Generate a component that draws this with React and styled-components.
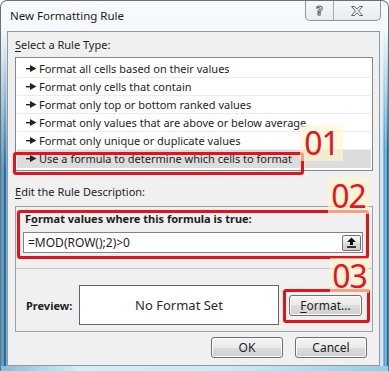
import React from 'react';
import styled, { createGlobalStyle } from 'styled-components';

const GlobalStyle = createGlobalStyle`
  html, body { margin: 0; padding: 0; background: #fff; }
  body {
    font-family: "Noto Sans", "Liberation Sans", sans-serif;
    font-size: 11px;
    color: #1e1e1e;
  }
`;

const Window = styled.div`
  position: relative;
  width: 389px;
  height: 371px;
  box-sizing: border-box;
  display: flex;
  flex-direction: column;
  border: 1px solid #6b7177;
  border-bottom: none;
  border-radius: 7px 7px 0 0;
  overflow: hidden;
  background: linear-gradient(to bottom, #f7fafc 0, #eef4f8 120px, #d7e9f3 100%);
`;

const TitleBar = styled.div`
  height: 30px;
  display: flex;
  justify-content: space-between;
  align-items: flex-start;
  padding-left: 9px;
`;

const Title = styled.div`
  line-height: 30px;
  font-size: 11.5px;
  color: #1b1b1b;
`;

const CaptionGroup = styled.div`
  display: flex;
  height: 19px;
  margin-right: 7px;
  border: 1px solid #8e9499;
  border-top: none;
  border-radius: 0 0 5px 5px;
  overflow: hidden;
  background: linear-gradient(to bottom, #f6f8fa, #e7ecef);
`;

const CaptionButton = styled.div`
  width: ${(p) => p.$w}px;
  display: flex;
  align-items: center;
  justify-content: center;
  & + & { border-left: 1px solid #a7adb2; }
`;

const HelpGlyph = styled.span`
  font-family: "DejaVu Sans", sans-serif;
  font-size: 12px;
  font-weight: bold;
  color: #fdfdfd;
  -webkit-text-stroke: 1px #5d6166;
  line-height: 1;
`;

const Body = styled.div`
  flex: 1;
  display: flex;
`;

const LeftFrame = styled.div`
  width: 6px;
  background:
    linear-gradient(to bottom, #f3f7fa 0, rgba(243, 247, 250, 0) 140px),
    linear-gradient(to right, #6f8496 0, #4eb6e6 2px, #1c4e80 4px, #9ccbe6 6px);
`;

const RightFrame = styled.div`
  width: 8px;
  background:
    linear-gradient(to bottom, #f3f7fa 0, rgba(243, 247, 250, 0) 120px),
    linear-gradient(to right, #dde9f0 0, #cfe3ef 3px, #3f8fca 4px, #7ed0f0 6px, #1a3e66 8px);
`;

const BottomFrame = styled.div`
  height: 5px;
  background: linear-gradient(to right, #8fb8d3, #d6ecf7 20%, #cfe7f4 60%, #9cc9e3);
`;

const Client = styled.div`
  flex: 1;
  display: flex;
  flex-direction: column;
  border: 1px solid #8d98a1;
  background: #f0f0f0;
  padding: 0 6px 0 7px;
`;

const SectionLabel = styled.div`
  line-height: 16px;
  margin-top: ${(p) => p.$top}px;
  color: #1e1e1e;
  u { text-decoration: underline; text-underline-offset: 2px; }
`;

const ListBox = styled.div`
  margin-top: 4px;
  border: 1px solid #828790;
  background: #fff;
  padding-top: 2px;
  height: 110px;
`;

const ListRow = styled.div`
  height: 18px;
  box-sizing: border-box;
  display: flex;
  align-items: center;
  padding-left: 9px;
  margin: 0 1px;
  border-bottom: 1px solid ${(p) => (p.$selected ? 'transparent' : '#ececec')};
  background: ${(p) => (p.$selected ? '#dcdcdc' : 'transparent')};
  color: #1e1e1e;
  white-space: nowrap;
  svg { margin-right: 2px; flex: none; }
`;

const GroupBox = styled.div`
  margin-top: 6px;
  border: 1px solid #a0a0a0;
  display: flex;
  flex-direction: column;
`;

const FormulaSection = styled.div`
  padding: 4px 9px 15px 7px;
  border-bottom: 1px solid #c6c6c6;
`;

const BoldLabel = styled.div`
  font-weight: bold;
  line-height: 16px;
  padding-left: 2px;
  u { text-decoration: underline; text-underline-offset: 2px; }
`;

const FormulaInput = styled.div`
  margin-top: 5px;
  height: 21px;
  box-sizing: border-box;
  border: 1px solid #7f858c;
  background: #fff;
  display: flex;
  align-items: center;
  padding: 0 1px 0 4px;
`;

const FormulaText = styled.div`
  flex: 1;
  font-size: 12px;
`;

const CollapseButton = styled.div`
  width: 19px;
  height: 16px;
  box-sizing: border-box;
  border: 1px solid #6f6f6f;
  border-radius: 2px;
  background: linear-gradient(to bottom, #f6f6f6 0, #ebebeb 50%, #dcdcdc 50%, #d0d0d0 100%);
  display: flex;
  align-items: center;
  justify-content: center;
`;

const PreviewRow = styled.div`
  display: flex;
  align-items: center;
  padding: 16px 0 6px 10px;
`;

const PreviewLabel = styled.div`
  width: 53px;
  font-weight: bold;
`;

const PreviewBox = styled.div`
  width: 200px;
  height: 40px;
  box-sizing: border-box;
  border: 1px solid #646464;
  background: #fff;
  display: flex;
  align-items: center;
  justify-content: center;
  font-size: 13px;
  color: #2a2a2a;
`;

const Button = styled.div`
  width: ${(p) => p.$w}px;
  height: 21px;
  box-sizing: border-box;
  border: 1px solid #707070;
  border-radius: 3px;
  box-shadow: inset 0 0 0 1px #fbfbfb;
  background: linear-gradient(to bottom, #f3f3f3 0, #ebebeb 50%, #dddddd 50%, #cfcfcf 100%);
  display: flex;
  align-items: center;
  justify-content: center;
  margin-left: ${(p) => p.$ml || 0}px;
  font-size: 12px;
  color: #1e1e1e;
  u { text-decoration: underline; text-underline-offset: 2px; }
`;

const ButtonRow = styled.div`
  display: flex;
  justify-content: flex-end;
  gap: 12px;
  margin-top: 5px;
  padding-right: 6px;
`;

const Highlight = styled.div`
  position: absolute;
  left: ${(p) => p.$x}px;
  top: ${(p) => p.$y}px;
  width: ${(p) => p.$w}px;
  height: ${(p) => p.$h}px;
  box-sizing: border-box;
  border: 3px solid #e3131b;
  border-radius: 3px;
`;

const StepTag = styled.div`
  position: absolute;
  left: ${(p) => p.$x}px;
  top: ${(p) => p.$y}px;
  width: ${(p) => p.$w}px;
  height: ${(p) => p.$h}px;
  display: flex;
  align-items: center;
  justify-content: center;
  background: rgba(255, 246, 205, 0.62);
  color: #e8141b;
  font-family: "Noto Sans", sans-serif;
  font-size: 32px;
  letter-spacing: -1px;
  line-height: 1;
`;

const Arrow = () => (
  <svg width="11" height="7" viewBox="0 0 11 7">
    <rect x="0" y="3" width="5" height="1.4" fill="#222" />
    <polygon points="4,0 10.5,3.6 4,7" fill="#222" />
  </svg>
);

const rules = [
  'Format all cells based on their values',
  'Format only cells that contain',
  'Format only top or bottom ranked values',
  'Format only values that are above or below average',
  'Format only unique or duplicate values',
  'Use a formula to determine which cells to format',
];

export default function App() {
  return (
    <>
      <GlobalStyle />
      <Window>
        <TitleBar>
          <Title>New Formatting Rule</Title>
          <CaptionGroup>
            <CaptionButton $w={27}>
              <HelpGlyph>?</HelpGlyph>
            </CaptionButton>
            <CaptionButton $w={46}>
              <svg width="14" height="12" viewBox="0 0 14 12">
                <path
                  d="M1.5 1.5 H4.5 L7 4.3 L9.5 1.5 H12.5 L8.6 6 L12.5 10.5 H9.5 L7 7.7 L4.5 10.5 H1.5 L5.4 6 Z"
                  fill="#fafafa"
                  stroke="#5d6166"
                  strokeWidth="1"
                  strokeLinejoin="round"
                />
              </svg>
            </CaptionButton>
          </CaptionGroup>
        </TitleBar>
        <Body>
          <LeftFrame />
          <Client>
            <SectionLabel $top={5}>
              <u>S</u>elect a Rule Type:
            </SectionLabel>
            <ListBox>
              {rules.map((r, i) => (
                <ListRow key={r} $selected={i === rules.length - 1}>
                  <Arrow />
                  {r}
                </ListRow>
              ))}
            </ListBox>
            <SectionLabel $top={13}>
              <u>E</u>dit the Rule Description:
            </SectionLabel>
            <GroupBox>
              <FormulaSection>
                <BoldLabel>
                  F<u>o</u>rmat values where this formula is true:
                </BoldLabel>
                <FormulaInput>
                  <FormulaText>=MOD(ROW();2)&gt;0</FormulaText>
                  <CollapseButton>
                    <svg width="11" height="11" viewBox="0 0 11 11">
                      <polygon points="5.5,0.5 10,5 7,5 7,8 4,8 4,5 1,5" fill="#111" />
                      <rect x="1" y="9.2" width="9" height="1.6" fill="#111" />
                    </svg>
                  </CollapseButton>
                </FormulaInput>
              </FormulaSection>
              <PreviewRow>
                <PreviewLabel>Preview:</PreviewLabel>
                <PreviewBox>No Format Set</PreviewBox>
                <Button $w={73} $ml={10}>
                  <span>
                    <u>F</u>ormat...
                  </span>
                </Button>
              </PreviewRow>
            </GroupBox>
            <ButtonRow>
              <Button $w={72}>OK</Button>
              <Button $w={72}>Cancel</Button>
            </ButtonRow>
          </Client>
          <RightFrame />
        </Body>
        <BottomFrame />
        <Highlight $x={12} $y={151} $w={291} $h={23} />
        <Highlight $x={16} $y={209} $w={352} $h={49} />
        <Highlight $x={282} $y={288} $w={87} $h={34} />
        <StepTag $x={299} $y={124} $w={43} $h={36}>01</StepTag>
        <StepTag $x={327} $y={176} $w={41} $h={37}>02</StepTag>
        <StepTag $x={329} $y={257} $w={39} $h={35}>03</StepTag>
      </Window>
    </>
  );
}
